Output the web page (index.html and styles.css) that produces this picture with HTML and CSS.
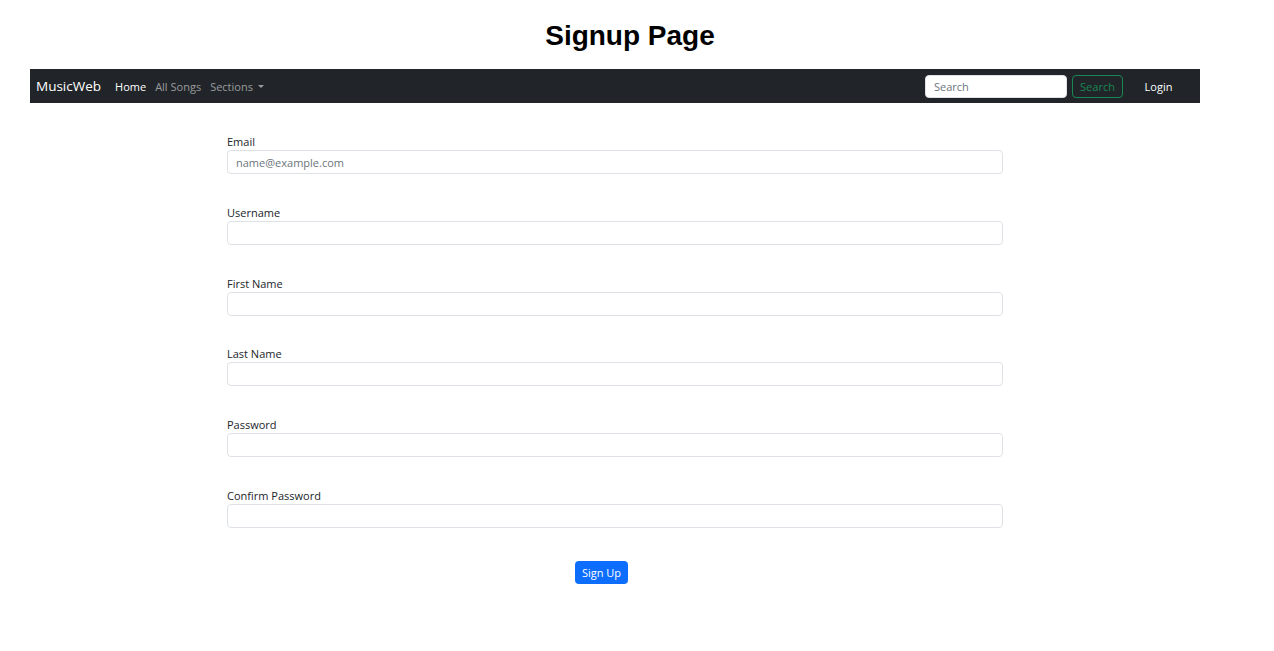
FILE: index.html
```html
<!DOCTYPE html>
<html lang="en">
<head>
<meta charset="utf-8">
<title>Signup Page</title>
<link rel="stylesheet" href="styles.css">
</head>
<body>
<h1 class="title">Signup Page</h1>
<nav class="navbar">
  <a class="brand" href="#">MusicWeb</a>
  <ul class="nav-links">
    <li><a class="nav-link active" href="#">Home</a></li>
    <li><a class="nav-link" href="#">All Songs</a></li>
    <li><a class="nav-link dropdown" href="#">Sections <span class="caret"></span></a></li>
  </ul>
  <form class="search">
    <input class="search-input" type="search" placeholder="Search">
    <button class="search-btn" type="button">Search</button>
  </form>
  <a class="login" href="#">Login</a>
</nav>
<form class="signup">
  <div class="group">
    <label class="label">Email</label>
    <input class="field" type="email" placeholder="name@example.com">
  </div>
  <div class="group">
    <label class="label">Username</label>
    <input class="field" type="text">
  </div>
  <div class="group">
    <label class="label">First Name</label>
    <input class="field" type="text">
  </div>
  <div class="group">
    <label class="label">Last Name</label>
    <input class="field" type="text">
  </div>
  <div class="group">
    <label class="label">Password</label>
    <input class="field" type="password">
  </div>
  <div class="group">
    <label class="label">Confirm Password</label>
    <input class="field" type="password">
  </div>
  <div class="actions">
    <button class="submit" type="button">Sign Up</button>
  </div>
</form>
</body>
</html>
```

FILE: styles.css
```css
* { box-sizing: border-box; }

body {
  margin: 0;
  font-family: "Open Sans", "Noto Sans", sans-serif;
  color: #212529;
  background: #fff;
}

.title {
  margin: 20px 14px 17px 0;
  font-family: "Liberation Sans", Arial, sans-serif;
  font-weight: bold;
  font-size: 28px;
  line-height: 32px;
  text-align: center;
  color: #000;
}

.navbar {
  display: flex;
  align-items: center;
  height: 34px;
  margin: 0 74px 0 30px;
  padding: 0 6px;
  background: #212529;
}

.brand {
  font-size: 13.5px;
  color: #fff;
  text-decoration: none;
  margin-right: 14px;
}

.nav-links {
  display: flex;
  list-style: none;
  margin: 0;
  padding: 0;
  gap: 9px;
  flex: 1;
}

.nav-link {
  font-size: 11px;
  color: rgba(255, 255, 255, 0.55);
  text-decoration: none;
  display: flex;
  align-items: center;
}

.nav-link.active { color: #fff; }

.caret {
  display: inline-block;
  margin-left: 5px;
  border-top: 3px solid rgba(255, 255, 255, 0.55);
  border-left: 3px solid transparent;
  border-right: 3px solid transparent;
}

.search {
  display: flex;
  gap: 5px;
  margin: 0;
}

.search-input {
  width: 142px;
  height: 23px;
  border: 1px solid #dee2e6;
  border-radius: 4px;
  padding: 0 8px;
  font-family: inherit;
  font-size: 11px;
  background: #fff;
}

.search-input::placeholder { color: #6c757d; }

.search-btn {
  width: 51px;
  height: 23px;
  border: 1px solid #198754;
  border-radius: 4px;
  background: transparent;
  color: #198754;
  font-family: inherit;
  font-size: 11px;
  padding: 0;
}

.login {
  width: 71px;
  text-align: center;
  font-size: 11px;
  color: #fff;
  text-decoration: none;
}

.signup {
  width: 776px;
  margin: 31px 0 0 227px;
}

.group {
  display: flex;
  flex-direction: column;
  margin-bottom: 30.8px;
}

.label {
  font-size: 11px;
  line-height: 16px;
  color: #212529;
}

.field {
  height: 24px;
  border: 1px solid #dee2e6;
  border-radius: 4px;
  padding: 0 8px;
  font-family: inherit;
  font-size: 11px;
  color: #212529;
}

.field::placeholder { color: #6c757d; }

.actions {
  display: flex;
  padding: 2px 0 0 348px;
}

.submit {
  width: 53px;
  height: 23px;
  border: none;
  border-radius: 4px;
  background: #0d6efd;
  color: #fff;
  font-family: inherit;
  font-size: 11px;
  padding: 0;
}
```
